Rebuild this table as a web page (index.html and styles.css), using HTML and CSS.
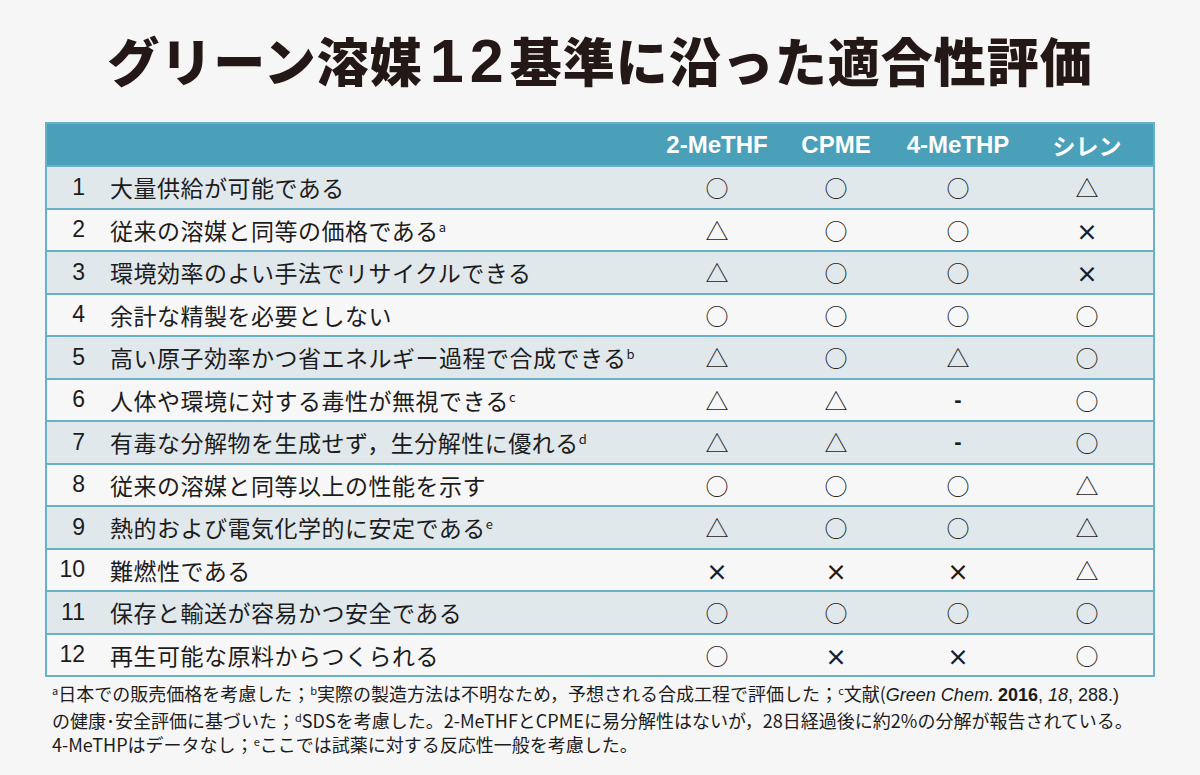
FILE: index.html
```html
<!DOCTYPE html>
<html lang="ja">
<head>
<meta charset="utf-8">
<link rel="stylesheet" href="styles.css">
</head>
<body>
<div class="page">
  <h1 class="title">グリーン溶媒<span class="num">12</span>基準に沿った適合性評価</h1>
  <div class="table">
    <div class="row head">
      <div class="c-no"></div>
      <div class="c-text"></div>
      <div class="c-mk en">2-MeTHF</div>
      <div class="c-mk en">CPME</div>
      <div class="c-mk en">4-MeTHP</div>
      <div class="c-mk jp">シレン</div>
    </div>
    <div class="row odd"><div class="c-no">1</div><div class="c-text">大量供給が可能である</div><div class="c-mk">○</div><div class="c-mk">○</div><div class="c-mk">○</div><div class="c-mk">△</div></div>
    <div class="row"><div class="c-no">2</div><div class="c-text">従来の溶媒と同等の価格である<sup>a</sup></div><div class="c-mk">△</div><div class="c-mk">○</div><div class="c-mk">○</div><div class="c-mk x">×</div></div>
    <div class="row odd"><div class="c-no">3</div><div class="c-text">環境効率のよい手法でリサイクルできる</div><div class="c-mk">△</div><div class="c-mk">○</div><div class="c-mk">○</div><div class="c-mk x">×</div></div>
    <div class="row"><div class="c-no">4</div><div class="c-text">余計な精製を必要としない</div><div class="c-mk">○</div><div class="c-mk">○</div><div class="c-mk">○</div><div class="c-mk">○</div></div>
    <div class="row odd"><div class="c-no">5</div><div class="c-text">高い原子効率かつ省エネルギー過程で合成できる<sup>b</sup></div><div class="c-mk">△</div><div class="c-mk">○</div><div class="c-mk">△</div><div class="c-mk">○</div></div>
    <div class="row"><div class="c-no">6</div><div class="c-text">人体や環境に対する毒性が無視できる<sup>c</sup></div><div class="c-mk">△</div><div class="c-mk">△</div><div class="c-mk dash">-</div><div class="c-mk">○</div></div>
    <div class="row odd"><div class="c-no">7</div><div class="c-text">有毒な分解物を生成せず，生分解性に優れる<sup>d</sup></div><div class="c-mk">△</div><div class="c-mk">△</div><div class="c-mk dash">-</div><div class="c-mk">○</div></div>
    <div class="row"><div class="c-no">8</div><div class="c-text">従来の溶媒と同等以上の性能を示す</div><div class="c-mk">○</div><div class="c-mk">○</div><div class="c-mk">○</div><div class="c-mk">△</div></div>
    <div class="row odd"><div class="c-no">9</div><div class="c-text">熱的および電気化学的に安定である<sup>e</sup></div><div class="c-mk">△</div><div class="c-mk">○</div><div class="c-mk">○</div><div class="c-mk">△</div></div>
    <div class="row"><div class="c-no">10</div><div class="c-text">難燃性である</div><div class="c-mk x">×</div><div class="c-mk x">×</div><div class="c-mk x">×</div><div class="c-mk">△</div></div>
    <div class="row odd"><div class="c-no">11</div><div class="c-text">保存と輸送が容易かつ安全である</div><div class="c-mk">○</div><div class="c-mk">○</div><div class="c-mk">○</div><div class="c-mk">○</div></div>
    <div class="row"><div class="c-no">12</div><div class="c-text">再生可能な原料からつくられる</div><div class="c-mk">○</div><div class="c-mk x">×</div><div class="c-mk x">×</div><div class="c-mk">○</div></div>
  </div>
  <p class="notes"><sup>a</sup>日本での販売価格を考慮した；<sup>b</sup>実際の製造方法は不明なため，予想される合成工程で評価した；<sup>c</sup>文献(<i class="lat">Green Chem.</i> <b class="lat">2016</b><span class="lat">, </span><i class="lat">18</i><span class="lat">, 288.)</span><br>の健康･安全評価に基づいた；<sup>d</sup>SDSを考慮した。2-MeTHFとCPMEに易分解性はないが，28日経過後に約2%の分解が報告されている。<br>4-MeTHPはデータなし；<sup>e</sup>ここでは試薬に対する反応性一般を考慮した。</p>
</div>
</body>
</html>
```

FILE: styles.css
```css
* { box-sizing: border-box; }
html, body { margin: 0; padding: 0; }
body {
  background: #f6f6f6;
  color: #1c1c1c;
  font-family: "Noto Sans CJK JP", "Noto Sans", sans-serif;
  width: 1200px;
  height: 775px;
  overflow: hidden;
}
.page { padding: 0 45px; }
.title {
  margin: 0;
  padding-top: 34px;
  height: 86px;
  font-size: 52px;
  line-height: 52px;
  font-weight: 900;
  letter-spacing: 1px;
  color: #231815;
  text-align: center;
  white-space: nowrap;
}
.title .num {
  font-family: "Liberation Sans", sans-serif;
  font-weight: 700;
  font-size: 61px;
  letter-spacing: 6px;
  margin-left: 7px;
}
.table {
  margin-top: 36px;
  border: 2px solid #68b2c9;
  width: 1110px;
}
.row {
  display: grid;
  grid-template-columns: 50px 560px 120px 118px 126px 132px;
  height: 42.5px;
  border-top: 2px solid #68b2c9;
  background: #f7f7f7;
  align-items: center;
}
.row.odd { background: #e1e8ec; }
.row.head {
  border-top: 0;
  height: 41px;
  background: #4aa0b8;
  color: #ffffff;
}
.c-no {
  font-family: "Liberation Sans", sans-serif;
  font-size: 23px;
  text-align: right;
  padding-right: 12px;
}
.c-text {
  font-size: 23px;
  letter-spacing: 0.5px;
  padding-left: 13px;
  white-space: nowrap;
  line-height: 30px;
}
.c-text sup, .notes sup {
  font-size: 13px;
  vertical-align: 0.6em;
  line-height: 0;
}
.c-mk {
  text-align: center;
  font-size: 23px;
  line-height: 30px;
}
.c-mk.x { font-weight: 700; font-size: 22px; }
.c-mk.dash { font-family: "Liberation Sans", sans-serif; font-weight: 700; font-size: 22px; }
.head .en {
  font-family: "Liberation Sans", sans-serif;
  font-weight: 700;
  font-size: 24px;
}
.head .jp {
  font-weight: 700;
  font-size: 23px;
}
.notes {
  margin: 4px 0 0 7px;
  font-size: 18px;
  line-height: 24.5px;
  white-space: nowrap;
  color: #1c1c1c;
}
.notes sup { font-size: 11px; vertical-align: 0.55em; }
.lat { font-family: "Liberation Sans", sans-serif; }
.notes b.lat { font-weight: 700; }
.notes i.lat { font-style: italic; }
```
